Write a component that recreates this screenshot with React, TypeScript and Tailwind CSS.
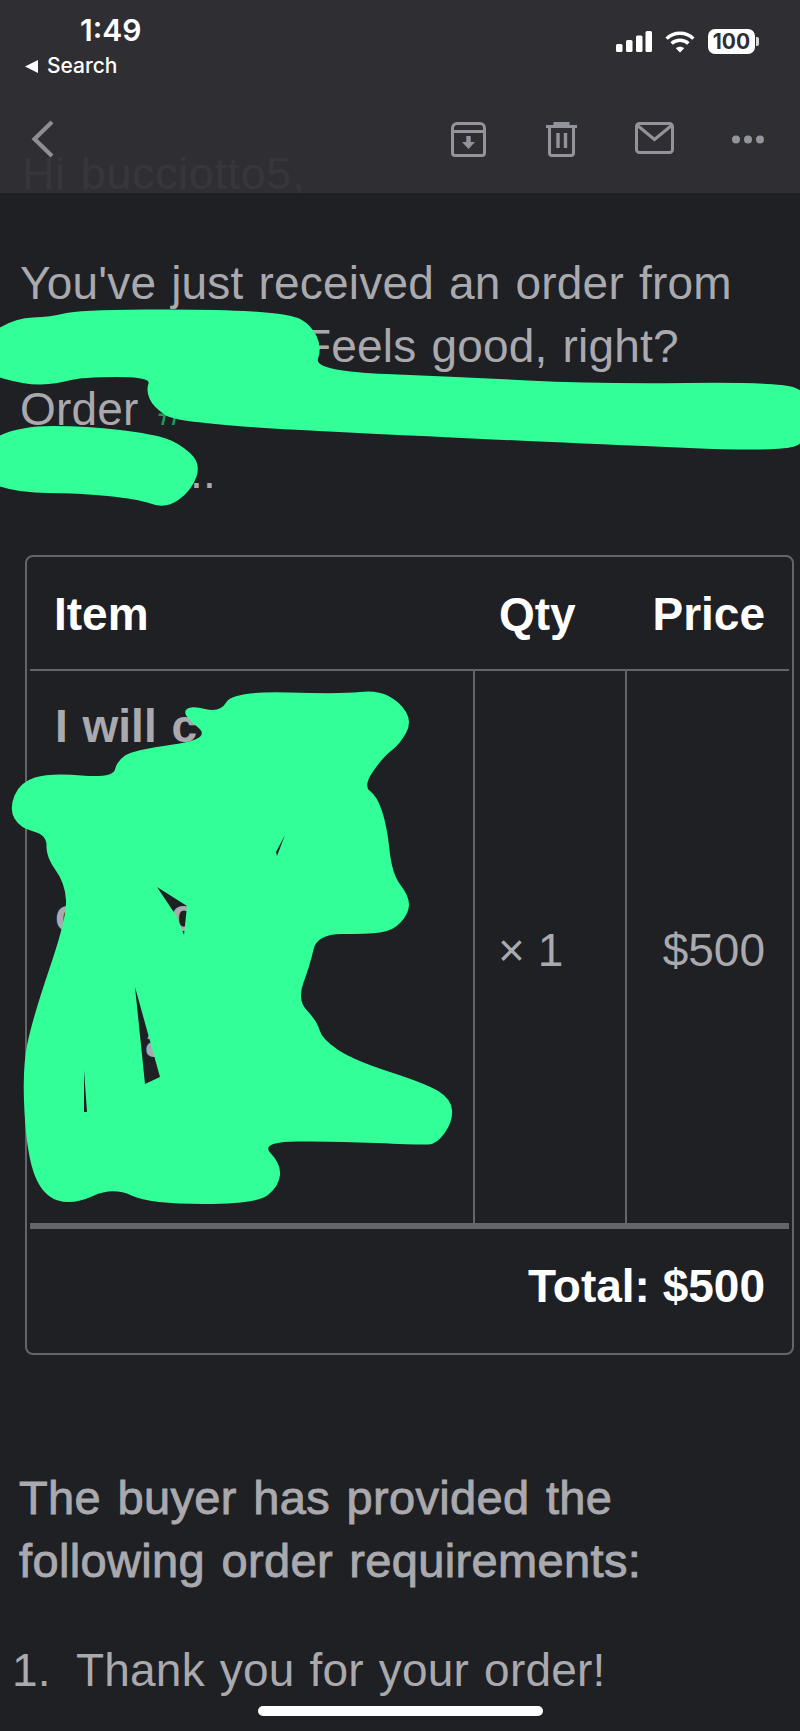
import React from "react";

type Pt = [number, number];

// smooth closed outline through the marker stroke's edge points
function blob(points: Pt[]) {
  const mid = (a: Pt, b: Pt): Pt => [(a[0] + b[0]) / 2, (a[1] + b[1]) / 2];
  const start = mid(points[points.length - 1], points[0]);
  let d = `M${start[0]} ${start[1]}`;
  points.forEach((p, i) => {
    const m = mid(p, points[(i + 1) % points.length]);
    d += ` Q${p[0]} ${p[1]} ${m[0]} ${m[1]}`;
  });
  return d + " Z";
}

const nameStroke: Pt[] = [
  [-20, 340], [15, 318], [51, 317], [77, 310], [214, 309], [291, 314], [311, 325], [322, 347], [314, 371],
  [459, 377], [597, 384], [776, 382], [810, 392], [810, 440], [781, 452], [597, 444], [459, 438], [179, 424],
  [153, 407], [146, 390], [151, 377], [82, 377], [56, 384], [26, 385], [-20, 372],
];

const orderStroke: Pt[] = [
  [-20, 445], [20, 426], [87, 426], [153, 434], [179, 443], [201, 463], [192, 490], [166, 509], [138, 499],
  [77, 493], [20, 493], [-20, 480],
];

const itemStroke: Pt[] = [
  [220, 713], [233, 691], [343, 694], [377, 690], [400, 702], [412, 722], [400, 744], [383, 757], [363, 786],
  [377, 796], [387, 826], [392, 874], [409, 896], [409, 913], [393, 931], [367, 934], [317, 934], [310, 965],
  [297, 1000], [317, 1021], [322, 1039], [353, 1060], [427, 1084], [451, 1099], [453, 1121], [437, 1144],
  [420, 1145], [333, 1141], [260, 1142], [281, 1164], [279, 1186], [257, 1204], [150, 1204], [113, 1187],
  [73, 1205], [43, 1196], [27, 1156], [22, 1069], [33, 1017], [67, 917], [65, 883], [46, 857], [47, 835],
  [20, 828], [9, 809], [20, 782], [50, 773], [113, 778], [117, 761], [133, 750], [213, 739], [182, 715],
  [190, 705],
];

const gap1 = "M157 887 L187 906 L184 935 L177 917 Z";
const gap2 = "M135 987 L160 1077 L145 1084 Z";
const gap3 = "M84 1070 L87 1112 L84 1112 Z";
const gap4 = "M285 835 L276 852 L277 856 Z";

function Scribbles() {
  return (
    <svg className="absolute inset-0 z-10 h-full w-full" viewBox="0 0 800 1731" aria-hidden="true">
      <path d={blob(nameStroke)} fill="#33ff99" />
      <path d={blob(orderStroke)} fill="#33ff99" />
      <path d={`${blob(itemStroke)} ${gap1} ${gap2} ${gap3} ${gap4}`} fill="#33ff99" fillRule="evenodd" />
    </svg>
  );
}

function StatusIcons() {
  return (
    <div className="flex items-center">
      <svg width="36" height="21" viewBox="0 0 36 21" fill="#fff">
        <rect x="0" y="13" width="6.5" height="8" rx="1.5" />
        <rect x="10" y="9" width="6.5" height="12" rx="1.5" />
        <rect x="20" y="4.5" width="6.5" height="16.5" rx="1.5" />
        <rect x="29.5" y="0" width="6.5" height="21" rx="1.5" />
      </svg>
      <svg className="ml-[13px]" width="30" height="22" viewBox="0 0 30 22" fill="none" stroke="#fff" strokeWidth="3.4">
        <path d="M1.6 7.6C9 .4 21 .4 28.4 7.6" />
        <path d="M6.6 12.6C11.2 8.2 18.8 8.2 23.4 12.6" />
        <path d="M15 21.6 L10.8 17.2C13 15.2 17 15.2 19.2 17.2Z" fill="#fff" stroke="none" />
      </svg>
      <div className="ml-[13px] flex items-center">
        <div className="flex h-[25px] w-[47px] items-center justify-center rounded-[7px] bg-white text-[21px] leading-none font-bold text-[#2f2f33] font-['Inter',sans-serif]">
          100
        </div>
        <div className="ml-[1px] h-[9px] w-[3px] rounded-r-[2px] bg-[#d8d8da]" />
      </div>
    </div>
  );
}

function Toolbar() {
  const gray = "#93949b";
  return (
    <div className="flex items-center pl-[31px] pr-[6px]">
      <svg width="23" height="38" viewBox="0 0 23 38" fill="none" stroke="#8e8e93" strokeWidth="4.2">
        <path d="M21 2 L3.5 19 L21 36" />
      </svg>
      <div className="ml-auto flex">
        <div className="flex w-[93px] justify-center">
          <svg width="35" height="35" viewBox="0 0 35 35" fill="none" stroke={gray} strokeWidth="3">
            <path d="M6 1.5h23a4.5 4.5 0 0 1 4.5 4.500v25a2.500 2.500 0 0 1-2.500 2.500H4a2.500 2.500 0 0 1-2.500-2.500V6A4.500 4.500 0 0 1 6 1.500Z" />
            <path d="M1.500 9.500h32" />
            <path d="M15.300 14h4.400v6h4.300l-6.500 7-6.500-7h4.300Z" fill={gray} stroke="none" />
          </svg>
        </div>
        <div className="flex w-[93px] justify-center">
          <svg width="31" height="35" viewBox="0 0 31 35" fill="none" stroke={gray} strokeWidth="3">
            <path d="M0 4.500h31" />
            <path d="M9 3V1.500h13V3" />
            <path d="M3.500 5v26a2.500 2.500 0 0 0 2.500 2.500h19a2.500 2.500 0 0 0 2.500-2.500V5" />
            <path d="M12 11v15M19.500 11v15" strokeWidth="3.400" />
          </svg>
        </div>
        <div className="flex w-[93px] justify-center">
          <svg width="39" height="32" viewBox="0 0 39 32" fill="none" stroke={gray} strokeWidth="3">
            <rect x="1.500" y="1.500" width="36" height="29" rx="3" />
            <path d="M2.500 3.500 L19.500 17.500 L36.500 3.500" />
          </svg>
        </div>
        <div className="flex w-[93px] items-center justify-center">
          <svg width="32" height="9" viewBox="0 0 32 9" fill={gray}>
            <circle cx="4" cy="4.500" r="4" />
            <circle cx="16" cy="4.500" r="4" />
            <circle cx="28" cy="4.500" r="4" />
          </svg>
        </div>
      </div>
    </div>
  );
}

function Header() {
  return (
    <header className="relative h-[193px] overflow-hidden bg-[#2f2f33]">
      <div className="absolute left-[22px] top-[142px] text-[45px] leading-[63px] tracking-[0.6px] text-[#37373b]">Hi bucciotto5,</div>
      <div className="relative flex h-[120px] justify-between pl-[25px] pr-[41px] pt-[12px]">
        <div className="font-['Inter',sans-serif] text-white [word-spacing:0]">
          <div className="pl-[55px] text-[30px] leading-[36px] font-semibold tracking-normal">1:49</div>
          <div className="mt-[5px] flex items-center">
            <svg width="13" height="13" viewBox="0 0 13 13" fill="#fff">
              <path d="M13 0V13L0 6.500Z" />
            </svg>
            <span className="ml-[9px] text-[21px] leading-[26px] font-medium tracking-normal">Search</span>
          </div>
        </div>
        <div className="pt-[17px] tracking-normal">
          <StatusIcons />
        </div>
      </div>
      <div className="relative">
        <Toolbar />
      </div>
    </header>
  );
}

function OrderTable() {
  return (
    <div className="ml-[25px] w-[769px] rounded-[8px] border-2 border-[#636568] px-[3px] tracking-normal">
      <div className="flex h-[114px] items-center border-b-2 border-[#636568] pt-[3px] text-white font-bold">
        <div className="w-[445px] pl-[24px]">Item</div>
        <div className="w-[152px] pl-[24px]">Qty</div>
        <div className="flex-1 pr-[24px] text-right">Price</div>
      </div>
      <div className="flex h-[558px] border-b-[6px] border-[#636568]">
        <div className="w-[445px] border-r-2 border-[#636568] pl-[25px] pt-[24px] font-bold">
          <div>I will c</div>
          <div className="h-[126px]" />
          <div className="flex">
            <span>c</span>
            <span className="ml-[90px]">c</span>
          </div>
          <div className="h-[63px]" />
          <div className="flex">
            <span className="ml-[90px]">a</span>
          </div>
        </div>
        <div className="flex w-[152px] items-center border-r-2 border-[#636568] pl-[23px] pt-[6px] [word-spacing:0]">× 1</div>
        <div className="flex flex-1 items-center justify-end pr-[24px] pt-[6px]">$500</div>
      </div>
      <div className="flex h-[124px] items-center justify-end pr-[24px] pb-[10px] font-bold text-white [word-spacing:0]">Total: $500</div>
    </div>
  );
}

export default function App() {
  return (
    <div className="relative h-[1731px] w-[800px] overflow-hidden bg-[#1f2024] text-[46px] leading-[63px] tracking-[0.2px] text-[#a9a9ae] [word-spacing:2px] font-['Liberation_Sans',Arial,sans-serif]">
      <Header />
      <main className="pt-[59px]">
        <div className="pl-[20px]">
          <div>You've just received an order from</div>
          <div className="pl-[283px]">Feels good, right?</div>
          <div className="flex">
            <span>Order</span>
            <span className="ml-[20px] text-[#1a9c5f]">#</span>
          </div>
          <div className="pl-[170px]">..</div>
        </div>
        <div className="mt-[51px]">
          <OrderTable />
        </div>
        <div className="mt-[111px] pl-[19px] text-[47px] tracking-[0.35px] [word-spacing:3px] [-webkit-text-stroke:0.9px_#a9a9ae]">
          <div>The buyer has provided the</div>
          <div>following order requirements:</div>
        </div>
        <ol className="mt-[47px] flex pl-[12px]">
          <li className="flex">
            <span className="w-[64px]">1.</span>
            <span>Thank you for your order!</span>
          </li>
        </ol>
      </main>
      <Scribbles />
      <div className="absolute bottom-[15px] left-[258px] z-20 h-[10px] w-[285px] rounded-full bg-white" />
    </div>
  );
}
